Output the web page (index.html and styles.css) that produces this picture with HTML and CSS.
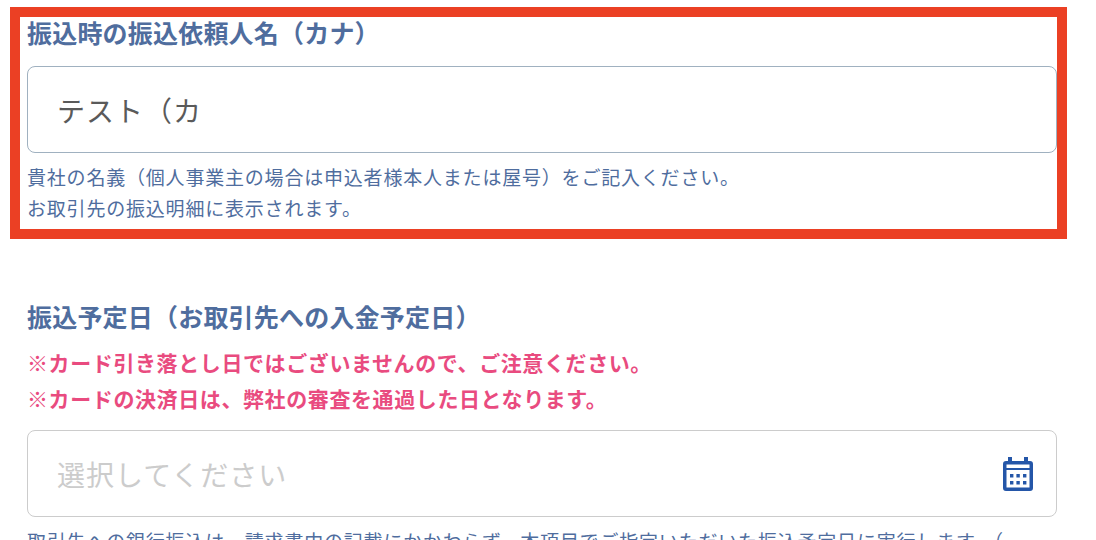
FILE: index.html
```html
<!DOCTYPE html>
<html lang="ja">

<head>
    <meta charset="UTF-8">
    <title>振込情報</title>
    <link rel="stylesheet" href="styles.css">
</head>

<body>
    <div class="page">
        <section class="field highlight">
            <h3 class="field-label">振込時の振込依頼人名（カナ）</h3>
            <div class="input-box filled">テスト（カ</div>
            <p class="help">貴社の名義（個人事業主の場合は申込者様本人または屋号）をご記入ください。<br>お取引先の振込明細に表示されます。</p>
        </section>

        <section class="field date-field">
            <h3 class="field-label">振込予定日（お取引先への入金予定日）</h3>
            <p class="notice">※カード引き落とし日ではございませんので、ご注意ください。<br>※カードの決済日は、弊社の審査を通過した日となります。</p>
            <div class="input-box empty">
                <span>選択してください</span>
                <svg class="calendar" viewBox="0 0 30 34" width="30" height="34">
                    <path fill="#2456a8" fill-rule="evenodd" d="M5 0h4v4h12V0h4v4h2a3 3 0 0 1 3 3v24a3 3 0 0 1-3 3H3a3 3 0 0 1-3-3V7a3 3 0 0 1 3-3h2zM3.500 7.500v3.500h23V7.500zM3.500 13v17.500h23V13z"/>
                    <path fill="#2456a8" d="M7 17h3.400v3.400H7zM13.400 17h3.400v3.400h-3.400zM20 17h3.400v3.400H20zM7 24h3.400v3.400H7zM13.400 24h3.400v3.400h-3.400zM20 24h3.400v3.400H20z"/>
                </svg>
            </div>
            <p class="help clipped">取引先への銀行振込は、請求書中の記載にかかわらず、本項目でご指定いただいた振込予定日に実行します。（</p>
        </section>
    </div>
</body>

</html>
```

FILE: styles.css
```css
html,
body {
    margin: 0;
    height: 540px;
    overflow: hidden;
    background: #fff;
}

body {
    font-family: "Noto Sans CJK JP", "Noto Sans", sans-serif;
    color: #4f6d9e;
}

.page {
    width: 1057px;
    padding: 7px 0 0 10px;
}

.field-label {
    margin: 0;
    font-size: 25px;
    line-height: 32px;
    font-weight: 700;
    letter-spacing: 0.2px;
    color: #4f6d9e;
}

/* Red frame */
.highlight {
    height: 212px;
    border: 10px solid #eb4024;
    padding: 0 0 0 7px;
}

.highlight .field-label {
    margin-top: -1px;
}

.input-box {
    display: flex;
    align-items: center;
    justify-content: space-between;
    box-sizing: border-box;
    height: 87px;
    padding: 0 23px 0 29px;
    border: 1px solid #a0b1c0;
    border-radius: 8px;
    font-size: 28px;
    letter-spacing: 1px;
    background: #fff;
}

.filled {
    margin-top: 18px;
    color: #5a5a5a;
}

.empty {
    margin-top: 14px;
    border-color: #ccc;
    color: #ccc;
}

.help {
    margin: 8px 0 0;
    font-size: 19px;
    line-height: 31px;
    letter-spacing: 0.8px;
}

/* Date field */
.date-field {
    padding: 61px 10px 0 17px;
}

.notice {
    margin: 12px 0 0;
    font-size: 21px;
    line-height: 36px;
    font-weight: 700;
    letter-spacing: 0.6px;
    color: #e94b7f;
}

.clipped {
    white-space: nowrap;
}
```
